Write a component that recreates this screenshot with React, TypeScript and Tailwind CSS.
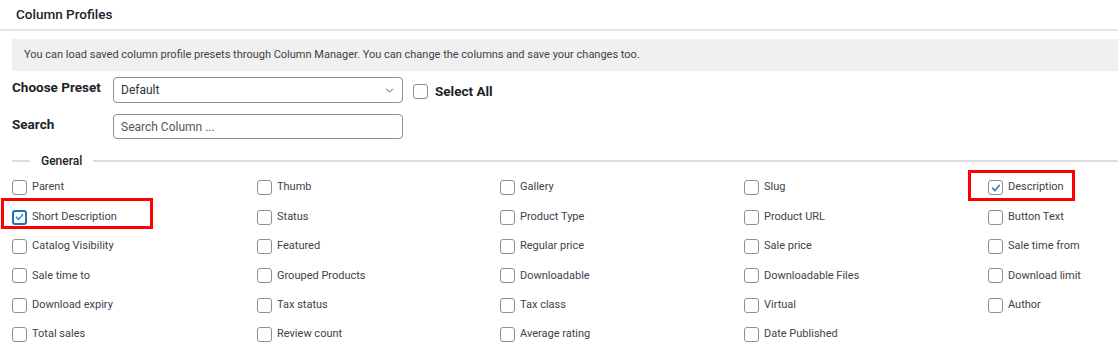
import React from "react";

const columns: [string, boolean][][] = [
  [["Parent", false], ["Thumb", false], ["Gallery", false], ["Slug", false], ["Description", true]],
  [["Short Description", true], ["Status", false], ["Product Type", false], ["Product URL", false], ["Button Text", false]],
  [["Catalog Visibility", false], ["Featured", false], ["Regular price", false], ["Sale price", false], ["Sale time from", false]],
  [["Sale time to", false], ["Grouped Products", false], ["Downloadable", false], ["Downloadable Files", false], ["Download limit", false]],
  [["Download expiry", false], ["Tax status", false], ["Tax class", false], ["Virtual", false], ["Author", false]],
  [["Total sales", false], ["Review count", false], ["Average rating", false], ["Date Published", false]],
];

const Box = ({ checked, focused }: { checked?: boolean; focused?: boolean }) => (
  <span
    className={
      "flex h-[15px] w-[15px] shrink-0 items-center justify-center rounded-[3px] bg-white " +
      (focused ? "border-2 border-[#2271b1]" : "border border-[#8c8f94]")
    }
  >
    {checked && (
      <svg viewBox="0 0 14 14" className="h-[12px] w-[12px]">
        <path d="M3 7.2 L5.8 10 L11 3.8" fill="none" stroke="#3582c4" strokeWidth="1.9" strokeLinecap="round" strokeLinejoin="round" />
      </svg>
    )}
  </span>
);

const App = () => {
  return (
    <div className="h-[360px] w-[1118px] overflow-hidden bg-white text-[#3c434a]" style={{ fontFamily: 'Roboto, "Noto Sans", sans-serif' }}>
      <div className="flex h-[31px] items-center border-b-2 border-[#e5e5e7] px-4 text-[13.5px] font-medium text-[#1d2327]">
        Column Profiles
      </div>
      <div className="ml-3 mt-2 flex h-[32px] items-center bg-[#f0f0f1] px-3 text-[11px] text-[#3c434a]">
        You can load saved column profile presets through Column Manager. You can change the columns and save your changes too.
      </div>

      <div className="mt-[6px] flex items-center pl-3">
        <div className="w-[101px] self-start text-[13.5px] font-bold text-[#1d2327]">Choose Preset</div>
        <div className="flex h-[26px] w-[290px] items-center justify-between rounded-[4px] border border-[#8c8f94] pl-[7px] pr-[8px] text-[12px] text-[#2c3338]">
          <span>Default</span>
          <svg viewBox="0 0 10 6" className="h-[5px] w-[9px]">
            <path d="M1 1 L5 5 L9 1" fill="none" stroke="#50575e" strokeWidth="1.2" />
          </svg>
        </div>
        <div className="ml-[10px] mt-[2px] flex items-center gap-[7px]">
          <Box />
          <span className="text-[13.5px] font-bold text-[#1d2327]">Select All</span>
        </div>
      </div>

      <div className="mt-[11px] flex items-center pl-3">
        <div className="w-[101px] self-start text-[13.5px] font-bold text-[#1d2327]">Search</div>
        <div className="flex h-[25px] w-[290px] items-center rounded-[4px] border border-[#8c8f94] pl-[7px] text-[12px] text-[#50575e]">
          Search Column ...
        </div>
      </div>

      <div className="mt-[13px] flex items-center pl-3">
        <div className="h-[2px] w-[18px] bg-[#dcdcde]" />
        <span className="px-[11px] text-[12px] font-medium text-[#1d2327]">General</span>
        <div className="h-[2px] flex-1 bg-[#dcdcde]" />
      </div>

      <div className="mt-[3px] pl-3">
        {columns.map((row, i) => (
          <div key={i} className="grid h-[29.4px] grid-cols-[245px_243px_244px_244px_244px] items-center">
            {row.map(([label, checked]) => (
              <div key={label} className="relative flex items-center gap-[5px] text-[11px]">
                {checked && label === "Short Description" && (
                  <span className="absolute left-[-11px] top-[-11px] h-[31px] w-[152px] border-[3px] border-[#f00]" />
                )}
                {checked && label === "Description" && (
                  <span className="absolute left-[-20px] top-[-9px] h-[31px] w-[107px] border-[3px] border-[#f00]" />
                )}
                <Box checked={checked} focused={label === "Short Description"} />
                <span>{label}</span>
              </div>
            ))}
          </div>
        ))}
      </div>
    </div>
  );
};

export default App;
